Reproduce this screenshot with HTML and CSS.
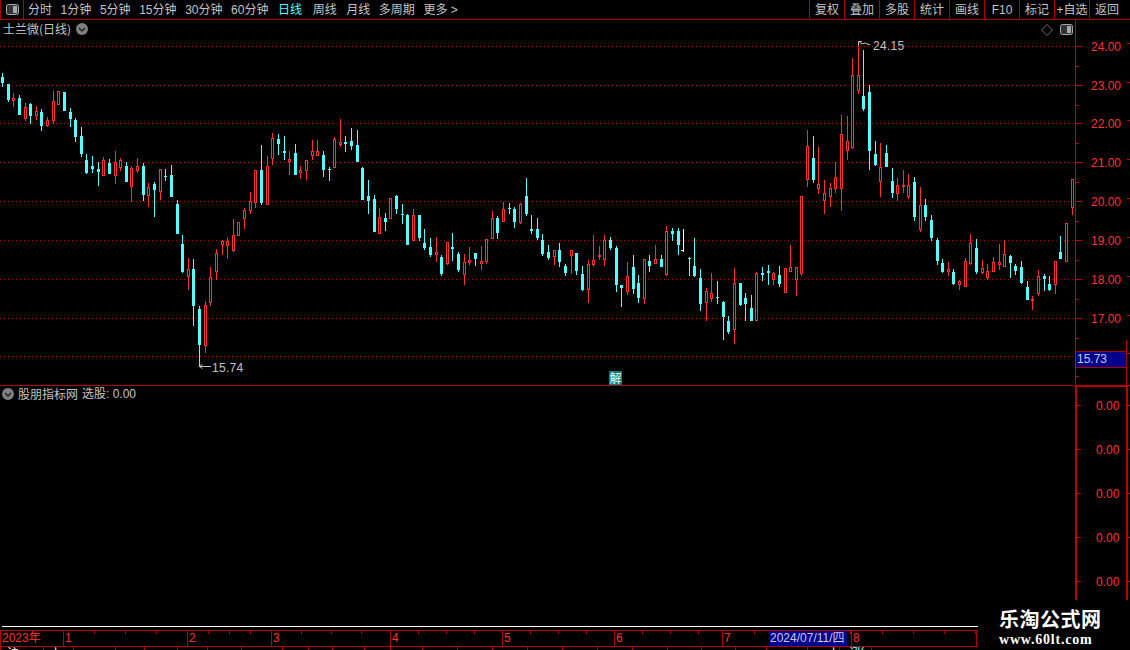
FILE: index.html
```html
<!DOCTYPE html>
<html lang="zh-CN">
<head>
<meta charset="utf-8">
<title>士兰微(日线)</title>
<link rel="stylesheet" href="styles.css">
</head>
<body>
<div class="app">
  <header class="toolbar">
    <button class="panel-toggle" aria-label="toggle">
      <svg class="panel-icon" viewBox="0 0 13 11"><rect x="0.5" y="0.5" width="12" height="10" rx="2" class="panel-frame"/><rect x="7" y="2" width="4" height="7" class="panel-fill"/></svg>
    </button>
    <nav class="periods">
      <span>分时</span><span>1分钟</span><span>5分钟</span><span>15分钟</span><span>30分钟</span><span>60分钟</span>
      <span class="active">日线</span><span>周线</span><span>月线</span><span>多周期</span><span>更多 &gt;</span>
    </nav>
    <nav class="tools">
      <span>复权</span><span>叠加</span><span>多股</span><span>统计</span><span>画线</span><span>F10</span><span>标记</span><span>+自选</span><span class="back">返回</span>
    </nav>
  </header>

  <section class="price-pane">
    <svg class="chart" id="price" viewBox="0 20 1130 365" width="1130" height="365" xmlns="http://www.w3.org/2000/svg">
      <defs>
        <pattern id="dots" width="4" height="1" patternUnits="userSpaceOnUse"><rect class="grid-dot" width="1" height="1"/></pattern>
      </defs>
      <g id="grid" shape-rendering="crispEdges"></g>
      <g id="candles" shape-rendering="crispEdges"></g>
      <g id="axis" shape-rendering="crispEdges"></g>
      <g class="axis-labels">
        <text x="1091" y="51">24.00</text><text x="1091" y="90">23.00</text><text x="1091" y="128">22.00</text>
        <text x="1091" y="167">21.00</text><text x="1091" y="206">20.00</text><text x="1091" y="245">19.00</text>
        <text x="1091" y="284">18.00</text><text x="1091" y="323">17.00</text>
      </g>
      <path class="marker" d="M858.5 45V41.5H862M859 41.5l3 2.5 3-1 5 2"/>
      <text class="extreme" x="873" y="50">24.15</text>
      <path class="marker" d="M199.5 366.5H211M199.5 366.5l3-2M199.5 366.5l3 2"/>
      <text class="extreme" x="212" y="372">15.74</text>
      <path class="diamond" d="M1047 24.5l5.5 5.5-5.5 5.5-5.5-5.5z"/>
      <rect class="panel-frame" x="1060.5" y="24.5" width="12" height="10" rx="2"/>
      <rect class="panel-fill" x="1067" y="26" width="4" height="7"/>
    </svg>
    <div class="pane-title">
      <span>士兰微(日线)</span>
      <svg class="chevron" viewBox="0 0 12 12"><circle cx="6" cy="6" r="6"/><path d="M3 5l3 3 3-3"/></svg>
    </div>
    <div class="last-price">15.73</div>
    <div class="jie-flag">解</div>
  </section>

  <section class="indicator-pane">
    <div class="indicator-body">
      <div class="pane-title indicator-title">
        <svg class="chevron" viewBox="0 0 12 12"><circle cx="6" cy="6" r="6"/><path d="M3 5l3 3 3-3"/></svg>
        <span>股朋指标网</span><span class="formula">选股: 0.00</span>
      </div>
    </div>
    <svg class="indicator-axis" viewBox="0 386 55 214" width="55" height="214" xmlns="http://www.w3.org/2000/svg">
      <g id="indAxis" shape-rendering="crispEdges"></g>
      <g class="axis-labels">
        <text x="21" y="410">0.00</text><text x="21" y="454">0.00</text><text x="21" y="498">0.00</text><text x="21" y="542">0.00</text><text x="21" y="586">0.00</text>
      </g>
    </svg>
  </section>

  <footer class="footer">
    <div class="timeline">
      <div class="white-rule"></div>
      <div class="months">
        <span class="month m0">2023年</span>
        <span class="month m1">1</span><span class="month m2">2</span><span class="month m3">3</span>
        <span class="month m4">4</span><span class="month m5">5</span><span class="month m6">6</span>
        <span class="month m7">7</span><span class="month m8">8</span><span class="month m9">9</span>
        <span class="date-cursor">2024/07/11/四</span>
      </div>
      <div class="status-row" id="statusRow"></div>
    </div>
    <div class="watermark">
      <div class="wm-title">乐淘公式网</div>
      <div class="wm-url">www.60lt.com</div>
    </div>
  </footer>
</div>
<script src="script.js"></script>
</body>
</html>
```

FILE: styles.css
```css
* { box-sizing: border-box; }
html, body { margin: 0; padding: 0; background: #000; overflow: hidden; }
body { width: 1130px; height: 650px; font: 12px/1 "Noto Sans CJK SC", "Liberation Sans", sans-serif; color: #c4c4c4; }
.app { display: flex; flex-direction: column; width: 1130px; height: 650px; overflow: hidden; }

.toolbar { display: flex; height: 20px; flex: none; border-bottom: 1px solid #b00000; }
.panel-toggle { width: 24px; padding: 0; background: #000; border: 0; border-left: 1px solid #b00000; border-right: 1px solid #b00000; display: flex; align-items: center; justify-content: center; }
.panel-icon { width: 13px; height: 11px; }
.panel-frame { fill: #333; stroke: #a8a8a8; stroke-width: 1; }
.panel-fill { fill: #a8a8a8; }
.periods { display: flex; gap: 8.6px; align-items: center; padding-left: 4px; font-family: "Liberation Sans", "Noto Sans CJK SC", sans-serif; }
.periods .active { color: #54ffff; margin-left: 1px; margin-right: 2px; }
.periods .active + span { margin-right: 1px; }
.tools { display: flex; margin-left: auto; font-family: "Liberation Sans", "Noto Sans CJK SC", sans-serif; }
.tools span { width: 35px; border-left: 1px solid #b00000; display: flex; align-items: center; justify-content: center; }
.tools .back { width: 41px; padding-right: 6px; }

.price-pane { position: relative; height: 366px; flex: none; border-bottom: 1px solid #b00000; }
.chart { position: absolute; left: 0; top: 0; display: block; }
.pane-title { position: relative; display: flex; align-items: center; gap: 5px; height: 18px; padding-left: 3px; }
.chevron { width: 12px; height: 12px; flex: none; }
.chevron circle { fill: #808080; }
.chevron path { fill: none; stroke: #222; stroke-width: 1.5; }
.grid-dot { fill: #a00000; }
.axis-labels text { font: 12px "Liberation Sans", sans-serif; fill: #ff3232; }
.extreme { font: 12px "Liberation Sans", sans-serif; fill: #c4c4c4; letter-spacing: 0.3px; }
.marker { fill: none; stroke: #c4c4c4; stroke-width: 1; }
.diamond { fill: none; stroke: #707070; stroke-width: 1; }
.last-price { position: absolute; left: 1076px; top: 331px; width: 51px; height: 17px; background: #00008b; border: 1px solid #b00000; border-left: 0; font: 12px/15px "Liberation Sans", sans-serif; color: #c8c8e8; padding-left: 1px; }
.jie-flag { position: absolute; left: 609px; top: 351px; width: 13px; height: 14px; background: #008080; color: #fff; font-size: 12px; line-height: 14px; text-align: center; }

.indicator-pane { display: flex; height: 214px; flex: none; }
.indicator-body { width: 1075px; flex: none; }
.indicator-title { padding-left: 2px; height: 15px; gap: 4px; }
.indicator-title .formula { font-family: "Liberation Sans", "Noto Sans CJK SC", sans-serif; }
.indicator-axis { flex: none; display: block; }

.footer { display: flex; flex: 1; min-height: 0; }
.timeline { width: 978px; flex: none; padding-top: 26px; }
.white-rule { height: 1px; margin-left: 2px; background: #fff; }
.months { position: relative; display: flex; height: 17px; margin-top: 3px; border-top: 1px solid #b00000; border-bottom: 1px solid #b00000; color: #ff3232; font: 12px/15px "Liberation Sans", "Noto Sans CJK SC", sans-serif; overflow: hidden; }
.month { flex: none; padding-left: 1px; border-left: 1px solid #b00000; background: linear-gradient(to left, #b00000 1px, transparent 1px) left top / var(--step) 3px repeat-x; }
.m0 { width: 63px; background: none; }
.m1 { width: 124px; --step: 31px; }
.m2 { width: 84px; --step: 21px; }
.m3 { width: 119px; --step: 30px; }
.m4 { width: 112px; --step: 28px; }
.m5 { width: 112px; --step: 28px; }
.m6 { width: 108px; --step: 28px; }
.m7 { width: 129px; --step: 32px; }
.m8 { width: 125px; --step: 31px; }
.m9 { width: 2px; padding-left: 0; --step: 31px; overflow: hidden; }
.date-cursor { position: absolute; left: 769px; top: 0; width: 78px; height: 15px; background: #00008b; color: #c8c8e8; font-size: 12px; line-height: 15px; white-space: nowrap; padding-left: 1px; }
.status-row { display: flex; height: 12px; }
.status-row span { flex: none; height: 12px; border-left: 1px solid #b00000; color: #fff; font-size: 12px; line-height: 12px; padding-left: 6px; white-space: nowrap; overflow: hidden; }
.status-row .wt { padding-left: 20px; }
.status-row .cy { color: #54ffff; padding-left: 9px; font-size: 16px; }

.watermark { padding: 8px 0 0 21px; color: #fff; }
.wm-title { font: 700 20px/22px "Noto Sans CJK SC", sans-serif; letter-spacing: 0.5px; white-space: nowrap; }
.wm-url { margin-top: 2px; font: 700 14px/15px "Liberation Serif", serif; letter-spacing: 0.8px; white-space: nowrap; }
```

FILE: script.js
```javascript
(function () {
  // Daily candles: colour (r, c, w), high, body top, body bottom, low — in chart pixels.
  var candles = "c 73 77 83 87|c 84 84 100 102|r 93 98 101 107|c 95 98 115 115|r 103 107 119 121|c 103 104 116 124|r 106 111 116 120|c 109 112 126 131|r 117 120 126 127|r 91 101 121 124|r 91 91 105 105|c 92 92 111 111|c 108 112 119 127|c 118 120 137 142|c 127 136 154 157|c 154 160 173 174|c 156 166 169 173|c 162 169 172 186|r 157 160 176 176|c 159 163 174 174|r 151 162 176 184|r 158 160 168 171|c 162 166 182 182|r 166 168 187 202|r 158 166 171 173|c 163 166 195 201|r 183 187 196 207|c 182 184 190 217|r 169 169 192 200|c 169 176 177 181|c 165 175 197 197|c 200 204 234 234|c 235 244 272 273|r 258 269 277 290|c 259 269 306 326|c 306 309 345 367|r 301 305 346 353|r 267 277 303 306|r 249 253 272 280|r 240 241 245 255|r 237 241 246 259|r 219 235 251 252|r 222 222 236 236|r 208 210 219 229|r 192 201 211 214|r 170 170 203 208|c 145 170 203 205|r 156 166 205 205|r 133 138 159 165|c 134 139 144 155|c 136 151 153 160|r 151 159 162 175|c 144 153 175 175|r 166 170 173 179|r 160 160 171 180|r 140 151 156 160|r 140 151 156 156|c 151 155 170 177|c 167 169 170 181|r 137 139 168 168|r 119 142 145 147|c 136 142 144 152|c 128 141 146 150|c 130 145 162 162|c 167 168 200 200|c 180 196 201 214|c 195 199 232 232|r 208 217 234 234|c 213 218 222 231|r 198 198 219 219|c 195 196 209 214|c 204 214 215 224|c 214 215 245 245|r 209 215 241 241|c 215 215 238 241|c 229 243 248 250|c 238 247 255 257|r 237 252 255 262|c 255 257 274 276|r 242 242 264 265|c 233 247 249 261|c 252 254 270 272|r 254 262 275 285|r 247 260 263 265|c 253 253 259 266|r 246 261 264 270|r 239 239 262 264|r 211 218 239 239|c 216 218 233 239|r 202 209 222 222|c 203 208 209 214|c 207 209 222 228|r 203 204 223 224|c 178 196 214 216|c 215 229 231 234|c 218 229 238 240|c 234 240 254 256|c 245 252 258 260|r 250 250 257 265|c 243 250 262 267|c 264 266 273 276|r 250 250 256 274|c 253 253 271 275|c 266 274 290 291|r 260 264 290 303|r 235 260 265 267|r 246 255 257 260|r 235 240 260 266|c 237 240 248 250|c 246 248 285 292|c 285 285 288 307|r 262 276 292 295|c 255 267 289 294|c 275 283 298 303|r 259 259 299 304|c 255 261 266 272|r 245 259 264 264|c 255 259 267 267|r 226 231 275 276|c 228 231 234 241|c 228 231 245 255|w 229 250 251 252|c 257 258 259 276|c 238 266 276 277|c 269 278 304 311|r 288 291 303 321|r 273 293 299 302|c 281 297 298 304|c 301 302 317 340|c 316 321 332 334|r 268 283 330 344|c 283 283 305 306|c 293 298 304 321|c 295 308 321 321|r 272 273 321 321|c 267 273 275 281|c 265 271 273 285|r 272 273 280 285|c 266 275 284 287|r 268 268 293 293|r 245 267 272 272|r 267 267 280 296|r 196 196 274 276|r 130 146 180 187|c 136 158 180 183|r 147 184 189 194|r 180 193 201 214|r 183 188 197 207|r 162 177 189 193|r 115 134 189 211|r 116 141 151 160|r 58 75 148 149|r 43 75 91 94|c 50 96 109 111|c 85 92 151 170|c 141 154 165 166|r 143 167 182 197|c 145 153 167 167|c 168 181 193 198|r 178 185 194 201|r 170 185 187 193|r 174 185 197 199|c 177 182 217 221|r 187 205 230 232|c 199 205 217 221|c 215 220 238 241|c 238 240 261 265|c 259 263 272 273|r 262 269 272 276|c 269 272 284 285|r 280 281 285 290|r 258 261 287 287|r 234 243 264 265|c 239 248 272 274|r 260 268 273 274|r 264 271 278 280|r 257 262 272 272|r 244 262 265 270|r 240 254 267 267|c 255 256 263 278|c 264 266 271 275|c 261 267 283 284|c 281 287 300 300|r 296 299 301 310|r 270 276 294 296|c 274 276 279 291|c 276 284 290 291|r 261 261 285 294|c 236 252 259 259|r 223 223 262 262|r 179 179 208 215";
  var NS = "http://www.w3.org/2000/svg";
  var COLORS = { r: "#ff3232", c: "#54ffff", w: "#ffffff" };
  var RED = "#c00000";
  var GRID = [46, 85, 123, 162, 201, 240, 279, 318, 356];

  function el(parent, name, attrs) {
    var node = document.createElementNS(NS, name);
    for (var key in attrs) node.setAttribute(key, attrs[key]);
    parent.appendChild(node);
    return node;
  }

  var gridLayer = document.getElementById("grid");
  GRID.forEach(function (y) {
    el(gridLayer, "rect", { x: 0, y: y, width: 1075, height: 1, fill: "url(#dots)" });
  });

  var candleLayer = document.getElementById("candles");
  candles.split("|").forEach(function (row, i) {
    var f = row.split(" ");
    var c = COLORS[f[0]], hi = +f[1], top = +f[2], bot = +f[3], lo = +f[4];
    var x = Math.floor(2.5 + 5.63 * i);
    el(candleLayer, "rect", { x: x, y: hi, width: 1, height: Math.max(lo - hi, 1), fill: c });
    if (f[0] === "r") {
      el(candleLayer, "rect", { x: x - 1, y: top, width: 3, height: Math.max(bot - top, 2), fill: c });
      if (bot - top > 2) el(candleLayer, "rect", { x: x, y: top + 1, width: 1, height: bot - top - 2, fill: "#000" });
    } else if (f[0] === "c") {
      el(candleLayer, "rect", { x: x - 1, y: top, width: 3, height: Math.max(bot - top, 1), fill: c });
    } else {
      el(candleLayer, "rect", { x: x - 2, y: top, width: 3, height: 1, fill: c });
    }
  });

  var axis = document.getElementById("axis");
  el(axis, "rect", { x: 1075, y: 20, width: 1, height: 365, fill: RED });
  el(axis, "rect", { x: 1126, y: 340, width: 1, height: 45, fill: RED });
  GRID.forEach(function (y) {
    el(axis, "rect", { x: 1076, y: y, width: 6, height: 1, fill: RED });
    el(axis, "rect", { x: 1076, y: y + 20, width: 3, height: 1, fill: RED });
    el(axis, "rect", { x: 1127, y: y - 3, width: 3, height: 1, fill: RED });
  });

  var indAxis = document.getElementById("indAxis");
  el(indAxis, "rect", { x: 0, y: 386, width: 2, height: 214, fill: RED });
  el(indAxis, "rect", { x: 51, y: 386, width: 2, height: 214, fill: RED });
  el(indAxis, "rect", { x: 0, y: 386, width: 53, height: 1, fill: RED });
  [405, 449, 493, 537, 581].forEach(function (y) {
    el(indAxis, "rect", { x: 2, y: y, width: 4, height: 1, fill: RED });
    el(indAxis, "rect", { x: 53, y: y, width: 2, height: 1, fill: RED });
  });

  // Status strip below the time axis; only its top edge shows above the page end.
  var statusRow = document.getElementById("statusRow");
  [["沪", 43, ""], ["上", 30, ""], ["", 42, ""], ["", 29, ""], ["", 33, ""], ["", 30, ""], ["", 34, ""], ["", 41, ""], ["", 26, ""], ["", 24, ""], ["", 32, ""], ["", 26, ""], ["", 32, ""],
   ["", 35, ""], ["", 35, ""], ["", 35, ""], ["", 35, ""], ["", 35, ""], ["", 35, ""], ["", 35, ""], ["", 34, ""], ["", 34, ""],
   ["", 31, ""], ["", 41, ""], ["上", 32, "wt"], ["涨", 32, "cy"], ["", 106, ""]].forEach(function (cell) {
    var span = document.createElement("span");
    span.textContent = cell[0];
    span.style.width = cell[1] + "px";
    span.className = cell[2];
    statusRow.appendChild(span);
  });
})();
```
